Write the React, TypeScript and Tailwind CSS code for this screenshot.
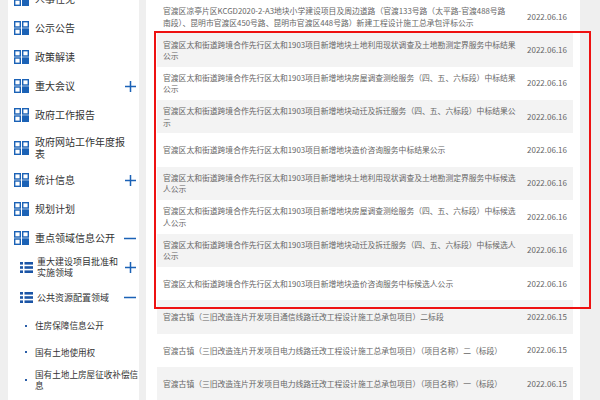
import React from "react";

const FONT = { fontFamily: '"Noto Sans CJK SC", "Noto Sans", sans-serif' };

function GridIcon() {
  return (
    <svg width="15" height="14" viewBox="0 0 15 14" className="shrink-0">
      <rect x="0.7" y="0.7" width="5.6" height="5.3" fill="none" stroke="#1b62b6" strokeWidth="1.4" />
      <rect x="8.7" y="0.7" width="5.6" height="5.3" fill="none" stroke="#1b62b6" strokeWidth="1.4" />
      <rect x="0.7" y="8" width="5.6" height="5.3" fill="none" stroke="#1b62b6" strokeWidth="1.4" />
      <rect x="8" y="7.3" width="7" height="6.7" fill="#1b62b6" />
    </svg>
  );
}

function ListIcon() {
  return (
    <svg width="13" height="11" viewBox="0 0 13 11" className="shrink-0">
      <rect x="0" y="0" width="3" height="2.6" fill="#1b55a6" />
      <rect x="4.5" y="0" width="8.5" height="2.6" fill="#1b55a6" />
      <rect x="0" y="4.2" width="3" height="2.6" fill="#1b55a6" />
      <rect x="4.5" y="4.2" width="8.5" height="2.6" fill="#1b55a6" />
      <rect x="0" y="8.4" width="3" height="2.6" fill="#1b55a6" />
      <rect x="4.5" y="8.4" width="8.5" height="2.6" fill="#1b55a6" />
    </svg>
  );
}

function Plus() {
  return (
    <svg width="11" height="11" viewBox="0 0 11 11" className="shrink-0">
      <rect x="0" y="4.75" width="11" height="1.5" fill="#1b62b6" />
      <rect x="4.75" y="0" width="1.5" height="11" fill="#1b62b6" />
    </svg>
  );
}

function Minus() {
  return (
    <svg width="12" height="11" viewBox="0 0 12 11" className="shrink-0">
      <rect x="0" y="4.75" width="12" height="1.5" fill="#1b62b6" />
    </svg>
  );
}

type SideItem = {
  lines: string[];
  h: string;
  kind: "main" | "sub" | "leaf";
  mark?: "plus" | "minus";
};

const side: SideItem[] = [
  { lines: ["人事任免"], h: "h-[29px]", kind: "main" },
  { lines: ["公示公告"], h: "h-[29px]", kind: "main" },
  { lines: ["政策解读"], h: "h-[29px]", kind: "main" },
  { lines: ["重大会议"], h: "h-[29px]", kind: "main", mark: "plus" },
  { lines: ["政府工作报告"], h: "h-[29px]", kind: "main" },
  { lines: ["政府网站工作年度报", "表"], h: "h-[36px]", kind: "main" },
  { lines: ["统计信息"], h: "h-[29px]", kind: "main", mark: "plus" },
  { lines: ["规划计划"], h: "h-[29px]", kind: "main" },
  { lines: ["重点领域信息公开"], h: "h-[29px]", kind: "main", mark: "minus" },
  { lines: ["重大建设项目批准和", "实施领域"], h: "h-[29.5px]", kind: "sub", mark: "plus" },
  { lines: ["公共资源配置领域"], h: "h-[30px]", kind: "sub", mark: "minus" },
  { lines: ["住房保障信息公开"], h: "h-[27px]", kind: "leaf" },
  { lines: ["国有土地使用权"], h: "h-[26px]", kind: "leaf" },
  { lines: ["国有土地上房屋征收补偿信", "息"], h: "h-[30px]", kind: "leaf" },
];

type Row = { lines: string[]; date: string };

const P = "官渡区太和街道跨境合作先行区太和1903项目新增地块";

const rows: Row[] = [
  {
    lines: [
      "官渡区凉亭片区KCGD2020-2-A3地块小学建设项目及周边道路（官渡133号路（太平路-官渡488号路",
      "南段）、昆明市官渡区450号路、昆明市官渡区448号路）新建工程设计施工总承包评标公示",
    ],
    date: "2022.06.16",
  },
  { lines: [P + "土地利用现状调查及土地勘测定界服务中标结果", "公示"], date: "2022.06.16" },
  { lines: [P + "房屋调查测绘服务（四、五、六标段）中标结果", "公示"], date: "2022.06.16" },
  { lines: [P + "动迁及拆迁服务（四、五、六标段）中标结果公", "示"], date: "2022.06.16" },
  { lines: [P + "造价咨询服务中标结果公示"], date: "2022.06.16" },
  { lines: [P + "土地利用现状调查及土地勘测定界服务中标候选", "人公示"], date: "2022.06.16" },
  { lines: [P + "房屋调查测绘服务（四、五、六标段）中标候选", "人公示"], date: "2022.06.16" },
  { lines: [P + "动迁及拆迁服务（四、五、六标段）中标候选人", "公示"], date: "2022.06.16" },
  { lines: [P + "造价咨询服务中标候选人公示"], date: "2022.06.16" },
  { lines: ["官渡古镇（三旧改造连片开发项目通信线路迁改工程设计施工总承包项目）二标段"], date: "2022.06.15" },
  { lines: ["官渡古镇（三旧改造连片开发项目电力线路迁改工程设计施工总承包项目）（项目名称）二（标段）"], date: "2022.06.15" },
  { lines: ["官渡古镇（三旧改造连片开发项目电力线路迁改工程设计施工总承包项目）（项目名称）一（标段）"], date: "2022.06.15" },
];

export default function App() {
  return (
    <div className="relative flex w-[600px] h-[400px] overflow-hidden bg-[#efefef]" style={FONT}>
      <aside className="ml-[8px] w-[131px] shrink-0 bg-white overflow-hidden">
        <div className="-mt-[15.5px] flex flex-col">
          {side.map((it, i) => (
            <div key={i} className={`flex items-center ${it.h} pr-[3px]`}>
              {it.kind === "main" && (
                <div className="flex items-center pl-[6px] gap-[6px] flex-1">
                  <GridIcon />
                  <div className="text-[10px] leading-[11.5px] text-[#333] whitespace-nowrap">
                    {it.lines.map((l, j) => (
                      <div key={j}>{l}</div>
                    ))}
                  </div>
                </div>
              )}
              {it.kind === "sub" && (
                <div className="flex items-center pl-[12px] gap-[4px] flex-1">
                  <ListIcon />
                  <div className="text-[9px] leading-[11px] text-[#333] whitespace-nowrap">
                    {it.lines.map((l, j) => (
                      <div key={j}>{l}</div>
                    ))}
                  </div>
                </div>
              )}
              {it.kind === "leaf" && (
                <div className="flex items-center pl-[17px] gap-[8px] flex-1">
                  <div className="w-[2px] h-[2px] bg-[#2b5ea8] shrink-0" />
                  <div className="text-[8.6px] leading-[11px] text-[#333] whitespace-nowrap">
                    {it.lines.map((l, j) => (
                      <div key={j}>{l}</div>
                    ))}
                  </div>
                </div>
              )}
              {it.mark === "plus" && <Plus />}
              {it.mark === "minus" && <Minus />}
            </div>
          ))}
        </div>
      </aside>

      <main className="ml-[7px] w-[434px] shrink-0 bg-white pl-[11px] pr-[7px]">
        {rows.map((r, i) => (
          <div
            key={i}
            className={`flex items-center justify-between h-[33.36px] pl-[6px] pr-[6px] ${
              i % 2 === 1 ? "bg-[#f3f3f3]" : "bg-white"
            }`}
          >
            <div className="w-[356px] text-[7.8px] leading-[11.5px] text-[#666] whitespace-nowrap">
              {r.lines.map((l, j) => (
                <div key={j}>{l}</div>
              ))}
            </div>
            <div className="text-[8px] text-[#666] whitespace-nowrap">{r.date}</div>
          </div>
        ))}
      </main>

      <div className="absolute left-[154px] top-[30.5px] w-[437px] h-[278px] border-2 border-[#ee1111] pointer-events-none" />
    </div>
  );
}
